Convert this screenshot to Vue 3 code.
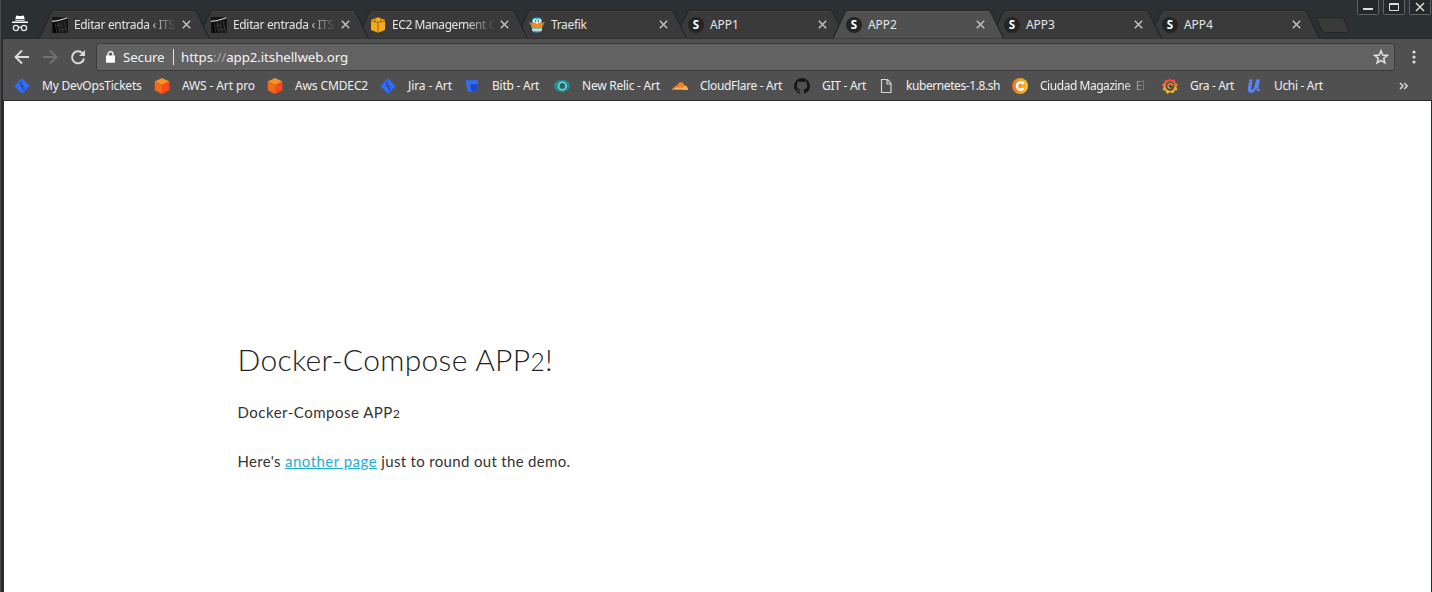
<script setup>
const tabs = [
  { title: 'Editar entrada ‹ ITS', icon: 'photo', w: 159, fade: true },
  { title: 'Editar entrada ‹ ITS', icon: 'photo', w: 159, fade: true },
  { title: 'EC2 Management C', icon: 'cube', w: 159, ls: -0.42, fade: true },
  { title: 'Traefik', icon: 'gopher', w: 159 },
  { title: 'APP1', icon: 's', w: 158, ls: -0.1 },
  { title: 'APP2', icon: 's', w: 158, ls: -0.1, active: true },
  { title: 'APP3', icon: 's', w: 158, ls: -0.1 },
  { title: 'APP4', icon: 's', w: 158, ls: -0.1 },
]
const bookmarks = [
  { title: 'My DevOpsTickets', icon: 'jira', w: 140, ls: -0.2 },
  { title: 'AWS - Art pro', icon: 'aws', w: 113, ls: -0.12 },
  { title: 'Aws CMDEC2', icon: 'aws', w: 113, ls: -0.12 },
  { title: 'Jira - Art', icon: 'jira', w: 84, ls: -0.1 },
  { title: 'Bitb - Art', icon: 'bit', w: 90, ls: -0.25 },
  { title: 'New Relic - Art', icon: 'relic', w: 118, ls: -0.24 },
  { title: 'CloudFlare - Art', icon: 'cloud', w: 122, ls: -0.33 },
  { title: 'GIT - Art', icon: 'git', w: 84, ls: -0.27 },
  { title: 'kubernetes-1.8.sh', icon: 'file', w: 134, ls: -0.42 },
  { title: 'Ciudad Magazine  El', icon: 'c', w: 150, ls: -0.46, fade: true },
  { title: 'Gra - Art', icon: 'gra', w: 84, ls: -0.35 },
  { title: 'Uchi - Art', icon: 'u', w: 90, ls: -0.33 },
]
</script>

<template>
  <div class="window">
    <header class="strip">
      <svg class="incognito" width="18" height="18" viewBox="0 0 18 18">
        <path d="M5 1.2Q5.2.4 6 .5L8 1h2l2-.5q.8-.1 1 .7L13.6 4H4.4zM4.2 4.8h9.6v1H4.2zM1 6.6h16v1.4H1z" fill="#fff" />
        <g fill="none" stroke="#e8e8e8" stroke-width="1.3"><circle cx="4.9" cy="13" r="2.6" /><circle cx="13" cy="13" r="2.6" /><path d="M7.5 12.6Q9 11.6 10.5 12.6" /></g>
      </svg>
      <div class="tabs">
        <div v-for="(t, i) in tabs" :key="i" class="tab" :class="{ active: t.active }" :style="{ width: t.w + 'px', zIndex: t.active ? 20 : 10 - i }">
          <svg class="shape" width="172" height="29" viewBox="0 0 172 29">
            <path class="fill" d="M0 28.5L12 2.5Q13 .5 15 .5H155Q157 .5 158 2.5L170.500 28.500z" />
            <path d="M0 28.5L12 2.5Q13 .5 15 .5H155Q157 .5 158 2.5L170.500 28.500" fill="none" stroke="#242627" stroke-width="1.2" />
            <path class="gleam" d="M14 1.6H156" />
          </svg>
          <svg class="fav" width="16" height="16" viewBox="0 0 16 16">
            <template v-if="t.icon === 'photo'">
              <path fill="#151515" d="M0 0h16v16H0z" /><path fill="#050505" d="M1 6l3-1 2 11H2z" />
              <path d="M0 4.300Q7 4 15.500.8" stroke="#d2d2d2" stroke-width="1.200" fill="none" />
              <path d="M3 6l2 10M6 5l2 10M9 5l2 11M12 4l3 12M4 9l5-1M8 13l6-1" stroke="#454545" stroke-width=".7" />
            </template>
            <template v-else-if="t.icon === 'cube'">
              <path fill="#f5ab19" d="M8 .3L15 2.900V13L8 15.800 1 13V2.900z" />
              <path d="M1 4L8 5.400 15 4M8 5.400v10.400M5 1.500V4.700M11 1.500V4.700" fill="none" stroke="#7a5a20" stroke-width=".8" />
            </template>
            <template v-else-if="t.icon === 'gopher'">
              <path d="M2.200 8L.8 5M13.800 8l1.400-3" stroke="#9a794d" stroke-width="1.500" />
              <rect x="3" y=".5" width="10" height="15" rx="4" fill="#35b4cf" /><path d="M3 3.500q5-2 10 0M3 11.500h10V14H3z" fill="#c8d6cf" /><path d="M2.300 5.500h11.400v5H2.300z" fill="#ee8b25" />
              <circle cx="5.900" cy="3.800" r="1.900" fill="#fff" /><circle cx="10.100" cy="3.800" r="1.900" fill="#fff" /><circle cx="6.500" cy="4" r=".7" /><circle cx="9.500" cy="4" r=".7" /><path d="M7 4.700h2v2H7z" fill="#f5e8d5" />
            </template>
            <template v-else>
              <circle cx="8" cy="8" r="8" fill="#242424" /><text x="8" y="12.100" text-anchor="middle" class="letter">S</text>
            </template>
          </svg>
          <span class="title" :class="{ fade: t.fade }" :style="{ letterSpacing: (t.ls ?? -0.34) + 'px' }">{{ t.title }}</span>
          <svg class="close" width="9" height="9" viewBox="0 0 9 9"><path d="M.8.8l7.400 7.400M8.200.8L.8 8.200" stroke="#c0c0c0" stroke-width="1.500" /></svg>
        </div>
        <svg class="newtab" width="34" height="17" viewBox="0 0 34 17"><path d="M1.500.7H25Q27 .7 28 2.500L32.400 14Q33 15.600 31 15.600H9Q7.300 15.600 6.500 14L1 2.500Q.3.700 1.500.700z" fill="#3a3a3a" stroke="#232627" /></svg>
      </div>
      <div class="controls">
        <svg width="22" height="15" viewBox="0 0 22 15"><path d="M.5-1V13.500Q.5 14.500 1.500 14.500H20.500Q21.500 14.500 21.500 13.500V-1" /><path class="glyph" d="M6 9h10" stroke-width="2" /></svg>
        <svg width="22" height="15" viewBox="0 0 22 15"><path d="M.5-1V13.500Q.5 14.500 1.500 14.500H20.500Q21.500 14.500 21.500 13.500V-1" /><path class="glyph" d="M6.500 3.500h9v7h-9zM6.500 4.500h9" /></svg>
        <svg width="22" height="15" viewBox="0 0 22 15"><path d="M.5-1V13.500Q.5 14.500 1.500 14.500H20.500Q21.500 14.500 21.500 13.500V-1" /><path class="glyph" d="M7 3l8 8M15 3l-8 8" stroke-width="1.500" /></svg>
      </div>
    </header>

    <div class="toolbar">
      <nav class="navrow">
        <svg width="94" height="28" viewBox="0 0 94 28">
          <g fill="none" stroke-width="1.800">
            <path d="M26 14H13M19 7.500L12.500 14l6.500 6.500" stroke="#dedede" />
            <path d="M40 14h13M47 7.500l6.500 6.500-6.500 6.500" stroke="#727272" />
            <path d="M79.500 10.200A6 6 0 1 0 81 15.500" stroke="#dadada" stroke-width="2" />
          </g>
          <path d="M82 7v6h-6z" fill="#dadada" />
        </svg>
        <div class="omnibox">
          <svg class="lock" width="9" height="12" viewBox="0 0 9 12"><path d="M0 4.500h9V11q0 .7-.7.7H.7Q0 11.700 0 11z" fill="#fff" /><path d="M2 5V3.200a2.500 2.500 0 0 1 5 0V5" fill="none" stroke="#fff" stroke-width="1.300" /></svg>
          <span class="secure">Secure</span><i class="bar"></i>
          <span class="url">https<em>://</em>app2.itshellweb.org</span>
          <svg class="star" width="16" height="16" viewBox="0 0 16 16"><path d="M8 1.800l1.700 4.300 4.600.3-3.600 2.900 1.200 4.500L8 11.300l-3.900 2.500 1.200-4.500L1.700 6.400l4.600-.3z" fill="none" stroke="#e2e2e2" stroke-width="1.500" /></svg>
        </div>
        <svg class="dots" width="6" height="16" viewBox="0 0 6 16"><g fill="#dedede"><circle cx="3" cy="3" r="1.600" /><circle cx="3" cy="8" r="1.600" /><circle cx="3" cy="13" r="1.600" /></g></svg>
      </nav>
      <nav class="marks">
        <div v-for="(b, i) in bookmarks" :key="i" class="mark" :style="{ width: b.w + 'px' }">
          <svg width="16" height="16" viewBox="0 0 16 16">
            <template v-if="b.icon === 'jira'"><path fill="#2e6dff" d="M8 .3L15.700 8 8 15.700.3 8z" /><path fill="#1f55d6" d="M8 2.500v3.200L6 7.500 5 5zM8 13.500v-3.200L10 8.500l1 2.500z" /><path fill="#3c4a6c" d="M8 6L10 8 8 10 6 8z" /></template>
            <template v-else-if="b.icon === 'aws'"><path fill="#ff9220" d="M8 0l7.300 3.600L8 7 .7 3.600z" /><path fill="#f36a18" d="M.7 3.600L8 7v9L.7 12.300z" /><path fill="#ff4a1c" d="M8 7l7.300-3.400v8.700L8 16z" /></template>
            <template v-else-if="b.icon === 'bit'"><path fill="#2e6dff" d="M1.700 2.300h12.600l-1.800 11.400H3.700z" /><path fill="#1d48cc" d="M10 6.200h3.700l-1.200 7.500H8.500L6.600 10h2.800z" /><path fill="#2b3f9c" d="M6.200 6.200h3.800l-.6 3.600H6.800z" /></template>
            <template v-else-if="b.icon === 'relic'"><ellipse cx="8" cy="8" rx="8" ry="6.200" fill="#238b91" /><circle cx="8.300" cy="8" r="3.700" fill="#306264" stroke="#74d7d5" stroke-width="1.600" /></template>
            <template v-else-if="b.icon === 'cloud'"><path fill="#f58220" d="M0 12q.2-2.500 2.600-2.900.6-2.200 2.600-1.500Q6.500 4.200 9 4.300q2.700.1 3.200 3 3.600.2 3.800 4.700z" /><path fill="#fbb14a" d="M12.200 7.700q3.400.3 3.800 4.300h-5z" /><path d="M3 10.300h8" stroke="#fff" stroke-width=".5" /></template>
            <template v-else-if="b.icon === 'git'"><path fill="#171717" d="M8 0a8 8 0 0 0-2.500 15.600c.4.100.5-.2.500-.4v-1.500c-2.200.5-2.700-1-2.700-1-.4-.9-.9-1.200-.9-1.200-.7-.5.100-.5.100-.5.8.1 1.200.8 1.200.8.700 1.300 1.900.9 2.400.7.100-.5.300-.9.500-1.100-1.800-.2-3.700-.9-3.700-4 0-.9.300-1.600.8-2.100-.1-.2-.4-1 .1-2.100 0 0 .7-.2 2.200.8a7.600 7.600 0 0 1 4 0c1.500-1 2.200-.8 2.200-.8.5 1.100.2 1.900.1 2.100.5.500.8 1.200.8 2.100 0 3.100-1.900 3.800-3.700 4 .3.300.6.800.6 1.500v2.300c0 .2.100.5.500.4A8 8 0 0 0 8 0z" /></template>
            <template v-else-if="b.icon === 'file'"><path d="M3.500 1.500h6l3.500 4v9H3.500zM9 1.500V6h4" fill="none" stroke="#d4d4d4" stroke-width="1.200" /></template>
            <template v-else-if="b.icon === 'c'"><defs><linearGradient id="warm"><stop stop-color="#ef6b18" /><stop offset="1" stop-color="#ffc72b" /></linearGradient></defs><circle cx="8" cy="8" r="8" fill="url(#warm)" /><path d="M11.500 5.700A3.700 3.700 0 1 0 11.500 10.300" stroke="#fff" stroke-width="2.500" fill="none" /></template>
            <template v-else-if="b.icon === 'gra'"><defs><linearGradient id="sun" x2="0" y2="1"><stop stop-color="#ef3038" /><stop offset="1" stop-color="#ffda18" /></linearGradient></defs><path d="M8 0l1.700 2.200L13 1.500l.1 3L16 6.500 14.400 9l1.200 3-3 .4L11 15.200 8 14l-3 1.800-1.300-3L.7 12l.8-3L0 6.500l2.600-1.700.1-3.300 3.200.7z" fill="url(#sun)" /><path d="M12.800 7.300A4.700 4.700 0 1 0 11 12" fill="#505050" /><path d="M8.600 10.400A2.400 2.400 0 1 1 10.800 8" stroke="#f59524" stroke-width="1.300" fill="none" /></template>
            <template v-else><path d="M3.200 3Q6 .8 5.500 3.700L4.300 9.500Q3.800 12.800 6 12.600 8.600 12.300 9.500 8.500L11 1.700M13 1.700L11.400 10.500Q11.100 13.500 14 11.800M9.500 9.500Q8 14.300 4.800 14 2.200 13.500 2.800 10L4 4M12 1.500L10.300 10" fill="none" stroke="#5b83ff" stroke-width="1.800" /></template>
          </svg>
          <span :class="{ clip: b.fade }" :style="{ letterSpacing: b.ls + 'px' }">{{ b.title }}</span>
        </div>
        <svg class="more" width="10" height="8" viewBox="0 0 10 8"><path d="M1 1l3 3-3 3M5.200 1l3 3-3 3" fill="none" stroke="#d8d8d8" stroke-width="1.500" /></svg>
      </nav>
    </div>

    <main class="page">
      <h1>Docker-Compose APP<small>2</small>!</h1>
      <p class="first">Docker-Compose APP<small>2</small></p>
      <p class="second">Here's <a>another page</a> just to round out the demo.</p>
    </main>
  </div>
</template>

<style>
body { margin: 0; overflow: hidden; }
</style>
<style scoped>
* { box-sizing: border-box; }
svg { display: block; flex: none; }
.window { width: 1432px; height: 592px; background: #292b2d; border-left: 1px solid #484a4b; font-family: "Noto Sans", sans-serif; overflow: hidden; display: flex; flex-direction: column; }
.strip { height: 39px; flex: none; background: #2b3033; display: flex; border-bottom: 1px solid #242627; }
.incognito { margin: 15px 0 0 10px; }
.tabs { display: flex; padding: 10px 0 0 10px; height: 39px; }
.tab { position: relative; height: 29px; display: flex; align-items: center; padding-left: 13px; flex: none; }
.shape { position: absolute; left: 0; top: 0; overflow: visible; }
.fill { fill: #3a3a3a; }
.gleam { stroke: #444; fill: none; }
.active .fill { fill: #505050; }
.active .gleam { stroke: #5c5c5c; }
.fav { position: relative; }
.letter { font: 700 11.500px "Noto Sans", sans-serif; fill: #fff; }
.title { position: relative; font-size: 12px; line-height: 18px; color: #e5e5e5; margin-left: 6px; width: 108px; white-space: nowrap; }
.fade { mask-image: linear-gradient(90deg, #000 74px, transparent 103px); }
.close { position: relative; }
.newtab { margin: 7px 0 0 9px; }
.controls { display: flex; gap: 4px; margin-left: auto; }
.controls { margin-right: 1px; }
.controls path { fill: #25282a; stroke: #606365; }
.controls .glyph { fill: none; stroke: #deded8; }
.toolbar { height: 62px; flex: none; background: #505050; margin-left: 2px; border-bottom: 1px solid #2c292b; display: flex; flex-direction: column; }
.navrow { height: 36px; display: flex; padding-top: 4px; }
.omnibox { width: 1299px; height: 28px; margin-left: -1px; background: #626262; border: 1px solid #3b3b3b; border-radius: 3px; display: flex; align-items: center; font-size: 13.300px; color: #f5f5f5; padding: 0 5px 0 9px; }
.secure { margin-left: 8px; width: 50px; letter-spacing: -.1px; }
.bar { width: 1px; height: 16px; background: #e0e0e0; margin-right: 7px; }
.url { letter-spacing: -.08px; }
em { font-style: normal; color: #a6a6a6; }
.star { margin-left: auto; }
.dots { margin: 6px 0 0 15.500px; }
.marks { display: flex; align-items: center; height: 24px; padding-left: 11px; margin-top: -1px; }
.mark { display: flex; flex: none; align-items: center; gap: 12px; font-size: 12px; line-height: 18px; color: #f0f0f0; }
.mark span { white-space: pre; }
.clip { width: 112px; mask-image: linear-gradient(90deg, #000 82px, transparent 112px); }
.more { margin-left: auto; margin-right: 23px; }
.page { flex: 1; background: #fff; margin: 0 1px 0 3px; padding: 240px 0 0 233.500px; font-family: Lato, sans-serif; color: #333; }
h1 { margin: 0; font-weight: 300; font-size: 30px; line-height: 36px; letter-spacing: .32px; color: #222; }
p { margin: 0; font-size: 15px; line-height: 24px; letter-spacing: .33px; }
small { font-size: .82em; }
.first { margin-top: 20px; letter-spacing: .5px; }
.second { margin-top: 23px; }
a { color: #1eaedb; text-decoration: underline; letter-spacing: .48px; }
</style>
